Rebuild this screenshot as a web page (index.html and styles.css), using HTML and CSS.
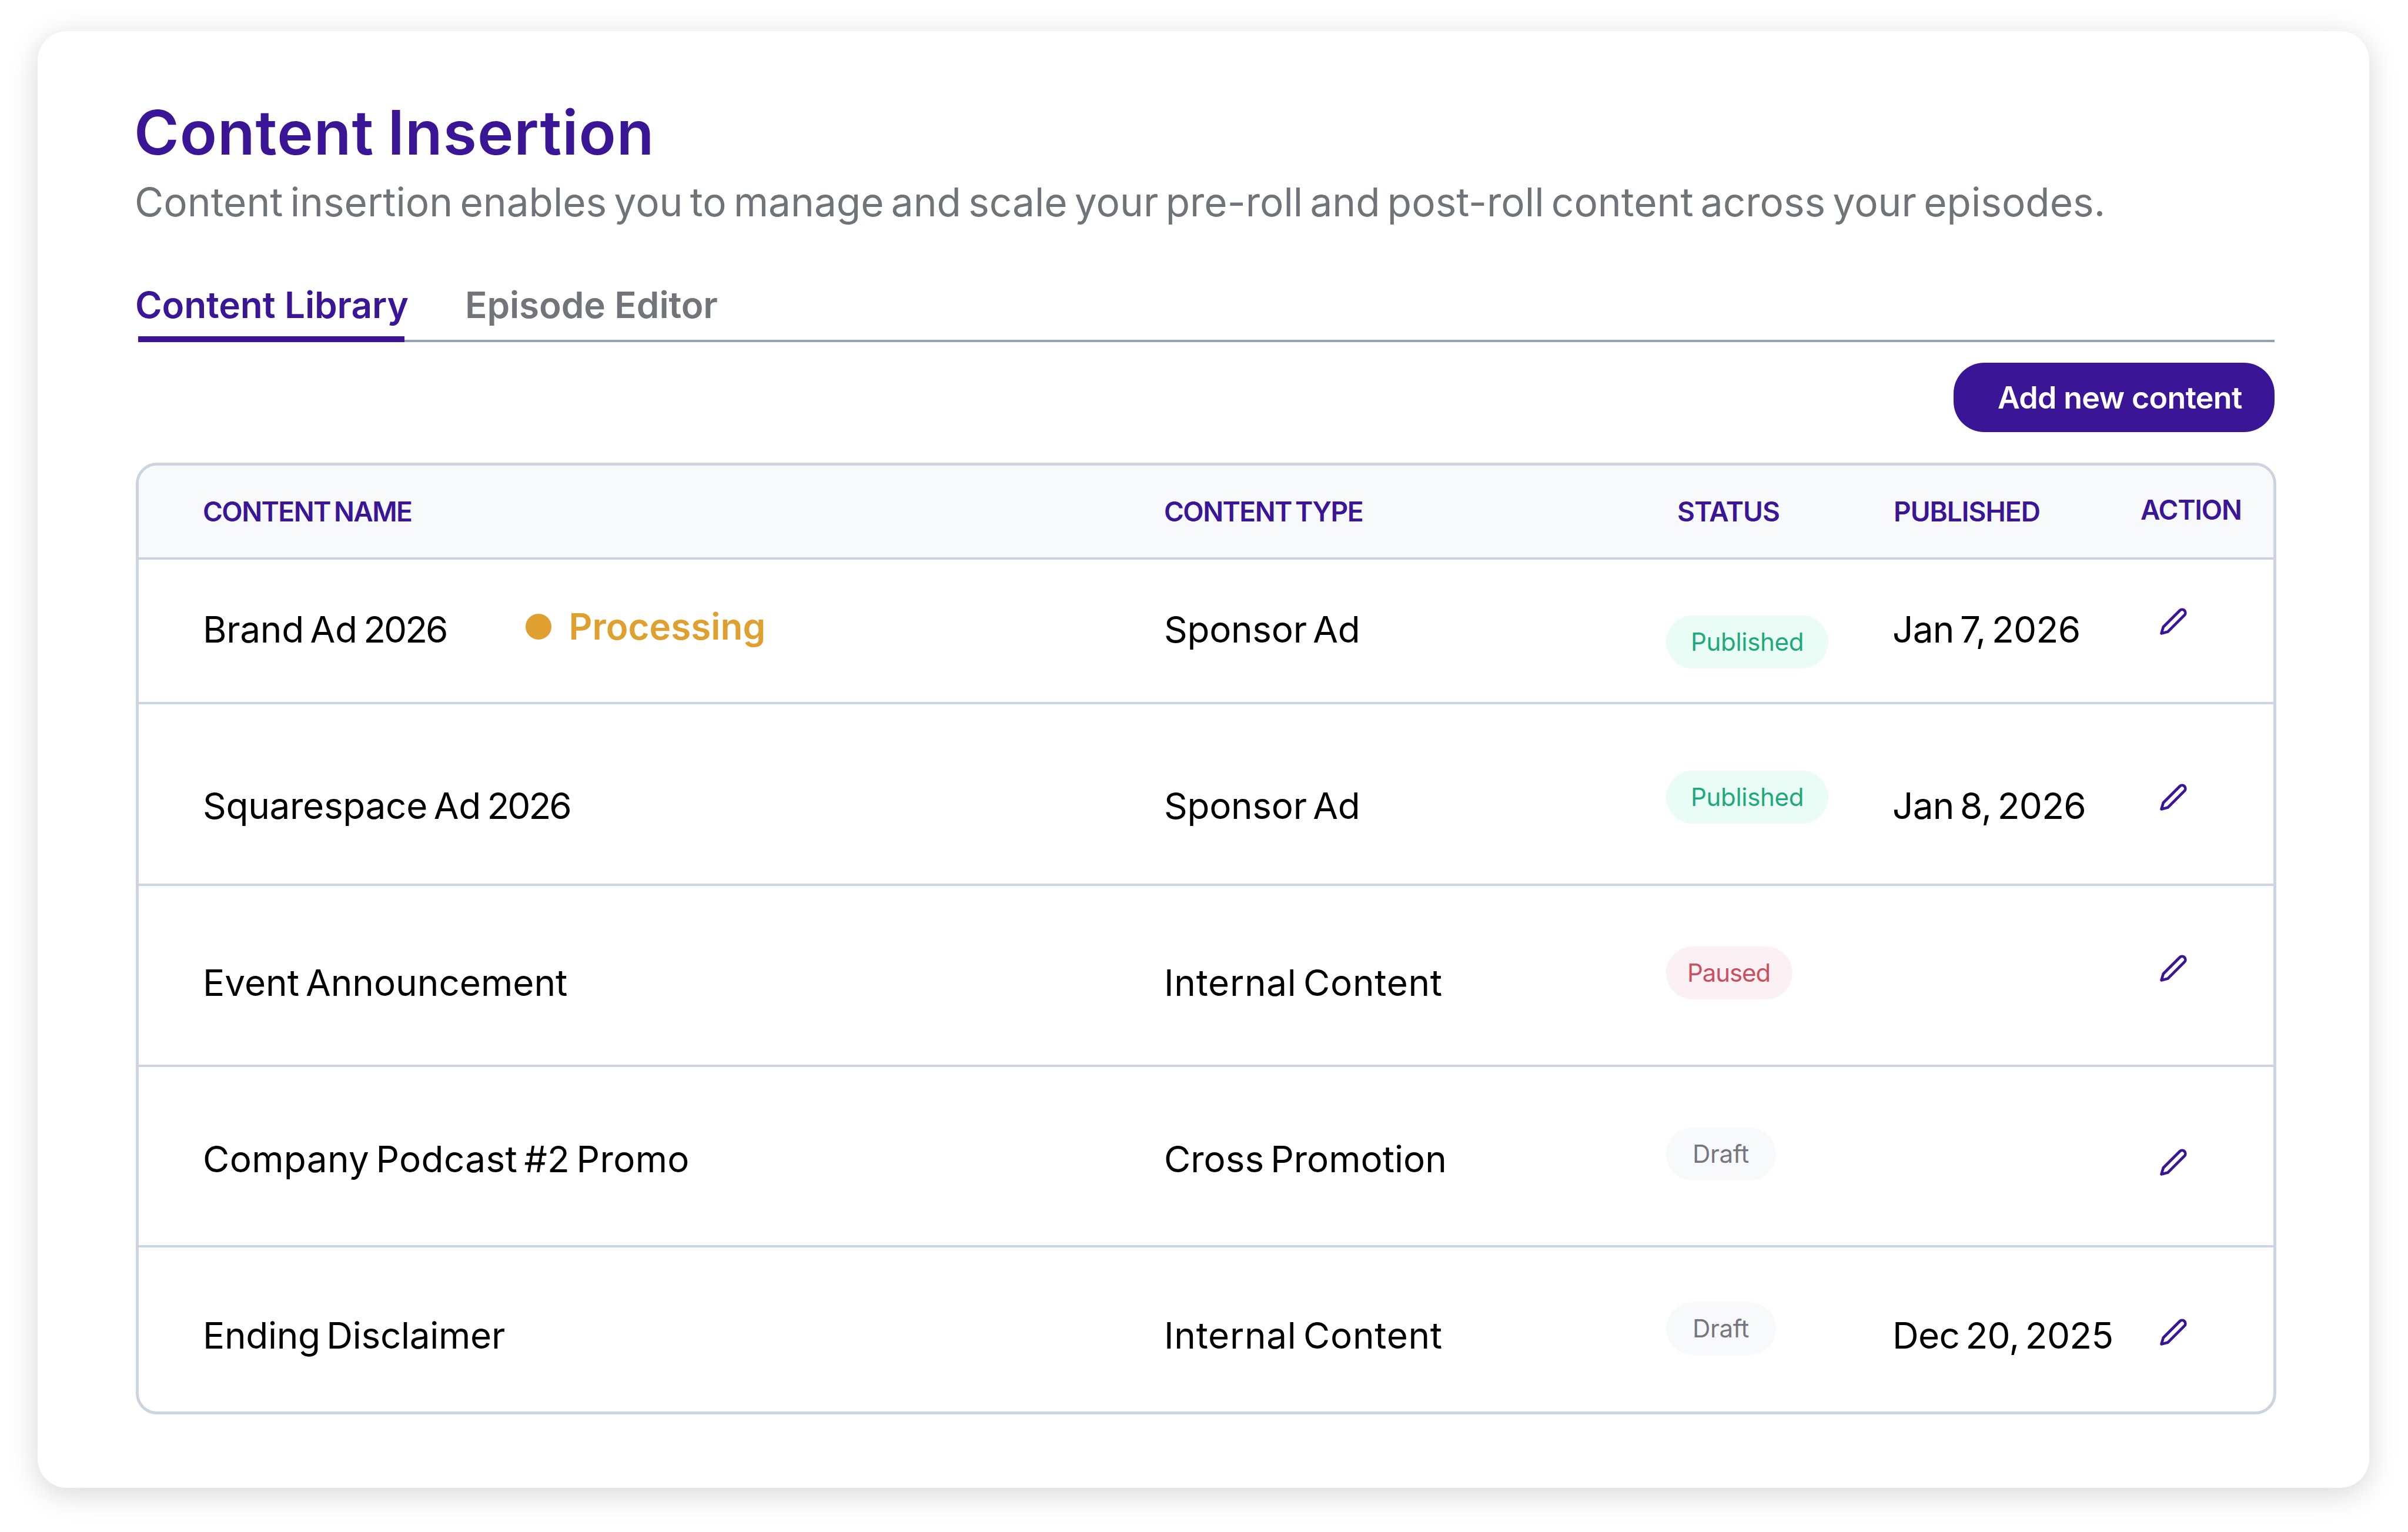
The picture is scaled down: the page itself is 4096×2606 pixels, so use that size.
FILE: index.html
```html
<!DOCTYPE html>
<html>
<head>
    <meta charset="UTF-8">
    <title>Content Insertion</title>
    <link rel="stylesheet" href="styles.css">
</head>
<body>
    <div class="card">
        <h1 class="title">Content Insertion</h1>
        <p class="subtitle">Content insertion enables you to manage and scale your pre-roll and post-roll content across your episodes.</p>

        <div class="tabs">
            <span class="tab tab-active">Content Library</span>
            <span class="tab">Episode Editor</span>
        </div>

        <div class="toolbar">
            <button class="add-btn">Add new content</button>
        </div>

        <div class="table">
            <div class="row head">
                <span>CONTENT NAME</span>
                <span>CONTENT TYPE</span>
                <span class="head-status">STATUS</span>
                <span>PUBLISHED</span>
                <span class="head-action">ACTION</span>
            </div>

            <div class="row row-1">
                <div class="cell name-cell">
                    <span>Brand Ad <span class="num">2026</span></span>
                    <span class="processing"><i class="dot"></i>Processing</span>
                </div>
                <div class="cell">Sponsor Ad</div>
                <div class="badge-cell"><span class="badge published">Published</span></div>
                <div class="cell date">Jan 7, 2026</div>
                <div class="icon-cell">
                    <svg class="pencil" viewBox="0 0 215 215"><path d="M12 203 L27 152 L158 21 A26 26 0 0 1 195 58 L64 189 Z"/></svg>
                </div>
            </div>

            <div class="row row-2">
                <div class="cell">Squarespace Ad <span class="num">2026</span></div>
                <div class="cell">Sponsor Ad</div>
                <div class="badge-cell"><span class="badge published">Published</span></div>
                <div class="cell date">Jan 8, 2026</div>
                <div class="icon-cell">
                    <svg class="pencil" viewBox="0 0 215 215"><path d="M12 203 L27 152 L158 21 A26 26 0 0 1 195 58 L64 189 Z"/></svg>
                </div>
            </div>

            <div class="row row-3">
                <div class="cell track-0">Event Announcement</div>
                <div class="cell track-2">Internal Content</div>
                <div class="badge-cell"><span class="badge paused">Paused</span></div>
                <div class="cell date"></div>
                <div class="icon-cell">
                    <svg class="pencil" viewBox="0 0 215 215"><path d="M12 203 L27 152 L158 21 A26 26 0 0 1 195 58 L64 189 Z"/></svg>
                </div>
            </div>

            <div class="row row-4">
                <div class="cell track-1">Company Podcast #2 Promo</div>
                <div class="cell track-0">Cross Promotion</div>
                <div class="badge-cell"><span class="badge draft">Draft</span></div>
                <div class="cell date"></div>
                <div class="icon-cell">
                    <svg class="pencil" viewBox="0 0 215 215"><path d="M12 203 L27 152 L158 21 A26 26 0 0 1 195 58 L64 189 Z"/></svg>
                </div>
            </div>

            <div class="row row-5">
                <div class="cell">Ending Disclaimer</div>
                <div class="cell track-2">Internal Content</div>
                <div class="badge-cell"><span class="badge draft">Draft</span></div>
                <div class="cell date">Dec 20, 2025</div>
                <div class="icon-cell">
                    <svg class="pencil" viewBox="0 0 215 215"><path d="M12 203 L27 152 L158 21 A26 26 0 0 1 195 58 L64 189 Z"/></svg>
                </div>
            </div>
        </div>
    </div>
</body>
</html>
```

FILE: styles.css
```css
* {
    box-sizing: border-box;
}
body {
    margin: 0;
    padding: 53px 66px 75px 64px;
    background: #fff;
    font-family: Inter, "Liberation Sans", sans-serif;
    color: #000;
}
.card {
    height: 2478px;
    padding: 112px 158px 125px 167px;
    background: #fff;
    border-radius: 50px;
    box-shadow: 0 10px 50px rgba(0,0,0,0.16);
}
.title {
    margin: 0 0 19px -3px;
    font-size: 104px;
    line-height: 120px;
    font-weight: 600;
    letter-spacing: 1px;
    word-spacing: -4px;
    color: #3a1696;
}
.subtitle {
    margin: 0 0 99px -2px;
    font-size: 67.5px;
    line-height: 80px;
    font-weight: 400;
    letter-spacing: 0;
    word-spacing: -6.7px;
    color: #6f7479;
}
.tabs {
    display: flex;
    gap: 103px;
    margin-right: 3px;
    margin-left: 6px;
    border-bottom: 4px solid #94a3bb;
}
.tab {
    position: relative;
    margin-left: -7px;
    padding-bottom: 27px;
    margin-bottom: -4px;
    font-size: 62px;
    line-height: 72px;
    font-weight: 600;
    letter-spacing: -0.1px;
    color: #71757a;
}
.tab-active {
    color: #3a1696;
}
.tab-active::after {
    content: "";
    position: absolute;
    left: 5px;
    right: 7px;
    bottom: 0;
    height: 10px;
    background: #3a1696;
}
.toolbar {
    display: flex;
    justify-content: flex-end;
    margin: 35px 3px 52px 0;
}
.add-btn {
    width: 546px;
    height: 118px;
    padding: 0 56px 0 75px;
    border: none;
    border-radius: 52px;
    background: #3a1696;
    color: #fff;
    font-family: inherit;
    font-size: 52px;
    font-weight: 600;
    letter-spacing: -0.7px;
    white-space: nowrap;
}
.table {
    height: 1619px;
    border: 5px solid #cbd5e1;
    border-radius: 36px;
    overflow: hidden;
}
.row {
    display: grid;
    grid-template-columns: 1635px 854px 387px 420px 1fr;
    align-items: start;
    padding-left: 109px;
    border-bottom: 4px solid #cbd5e1;
    font-size: 62px;
    line-height: 72px;
    font-weight: 420;
    letter-spacing: -0.3px;
    word-spacing: -6.5px;
}
.head {
    height: 160px;
    padding-top: 50px;
    background: #f8f9fb;
    font-size: 46px;
    line-height: 56px;
    font-weight: 600;
    letter-spacing: -1.55px;
    word-spacing: -4px;
    color: #3a1696;
}
.head-status {
    padding-left: 19px;
    letter-spacing: -1px;
}
.head-action {
    margin-top: -3px;
    letter-spacing: -1.2px;
}
.head-status + span {
    letter-spacing: -1px;
}
.row-1 { height: 246px; --text-top: 83px; --badge-top: 95px; --icon-top: 82px; }
.row-2 { height: 309px; --text-top: 137px; --badge-top: 113px; --icon-top: 135px; }
.row-3 { height: 308px; --text-top: 129px; --badge-top: 103px; --icon-top: 117px; }
.row-4 { height: 307px; --text-top: 121px; --badge-top: 103px; --icon-top: 139px; }
.row-5 { height: 279px; --text-top: 114px; --badge-top: 93px; --icon-top: 121px; border-bottom: none; }
.cell {
    padding-top: var(--text-top);
}
.track-0 { letter-spacing: 0; }
.track-1 { letter-spacing: 0.35px; }
.track-2 { letter-spacing: 0.7px; }
.num {
    letter-spacing: -3px;
}
.date {
    margin-left: -2px;
    letter-spacing: -0.7px;
}
.name-cell {
    display: flex;
}
.processing {
    display: flex;
    align-items: center;
    margin: -10px 0 0 135px;
    font-weight: 600;
    color: #e0a030;
    letter-spacing: 0;
}
.dot {
    width: 44px;
    height: 44px;
    margin-right: 29px;
    border-radius: 50%;
    background: #e0a030;
}
.badge-cell {
    padding-top: var(--badge-top);
}
.badge {
    display: inline-block;
    height: 90px;
    padding: 0 46px 0 45px;
    border-radius: 45px;
    font-size: 42px;
    line-height: 90px;
    font-weight: 400;
    letter-spacing: -0.3px;
    word-spacing: 0;
}
.published {
    padding: 0 42px;
    background: #e9fcf6;
    color: #1fa97a;
}
.paused {
    padding: 0 38px 0 36px;
    letter-spacing: -1.1px;
    background: #fbf1f5;
    color: #c9505f;
}
.draft {
    background: #f8f9fb;
    color: #74777f;
}
.icon-cell {
    padding: var(--icon-top) 0 0 33px;
    line-height: 0;
}
.pencil {
    width: 46px;
    height: 46px;
    fill: none;
    stroke: #3a1696;
    stroke-width: 22;
    stroke-linejoin: round;
}
```
